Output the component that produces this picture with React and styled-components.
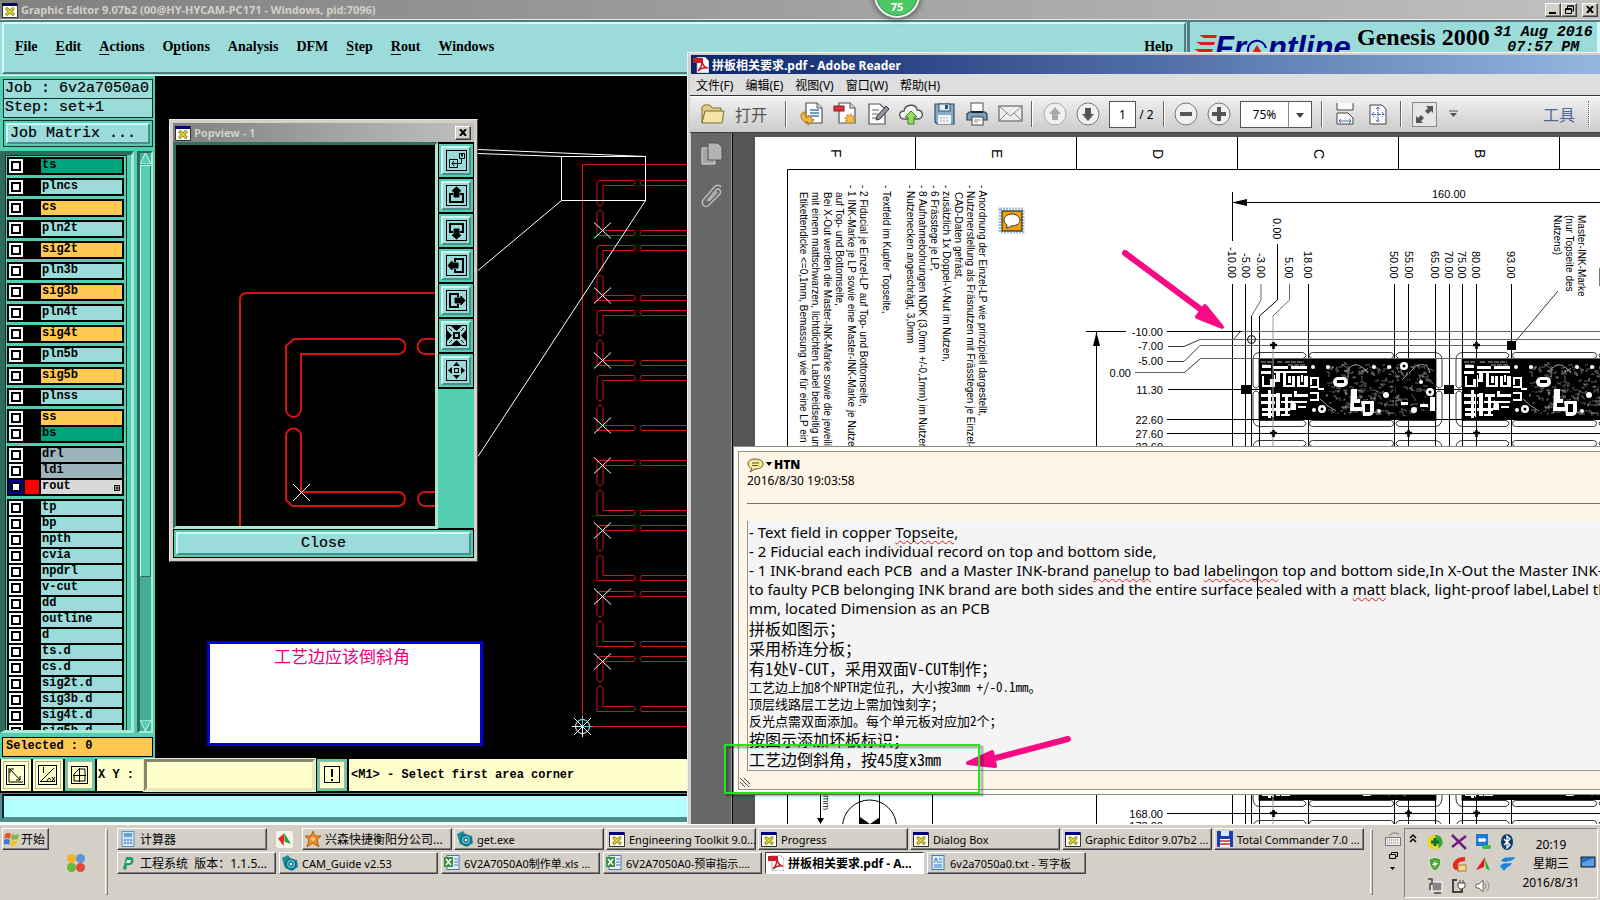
import React, { Fragment, useState } from "react";
import styled, { createGlobalStyle, css } from "styled-components";

const uiFont = '"Noto Sans", "Noto Sans CJK SC", sans-serif';
const monoFont = '"Liberation Mono", "Noto Sans CJK SC", monospace';
const serifFont = '"Liberation Serif", "Times New Roman", serif';
const songFont = '"Noto Sans Mono CJK SC", "Noto Sans CJK SC", monospace';

const aqua = "#9bdbda";
const green = "#54ceb0";
const greenDark = "#2f6b5c";
const greenLight = "#a6ecd8";
const cream = "#ffffce";
const face = "#d4d0c8";

const GlobalStyle = createGlobalStyle`
  * { box-sizing: border-box; }
  body { margin: 0; background: #000; font-family: ${uiFont}; }
  button, input, select { font: inherit; color: inherit; margin: 0; border-radius: 0; }
  button { padding: 0; background: none; border: 0; }
  svg { display: block; flex: none; }
`;

const Desktop = styled.div`
  position: relative;
  display: flex;
  flex-direction: column;
  height: 100vh;
  overflow: hidden;
`;

/* ---------- shared window bits ---------- */

const raised = css`
  border: 1px solid;
  border-color: #fff #404040 #404040 #fff;
  box-shadow: inset -1px -1px 0 #808080;
`;

const CaptionButton = styled.button`
  ${raised}
  display: flex;
  align-items: center;
  justify-content: center;
  width: 16px;
  height: 14px;
  background: ${face};
`;

const XIcon = ({ size = 16 }) => (
  <svg width={size} height={size} viewBox="0 0 16 16">
    <path d="M0.500 1.500 H15.500 V15.500 H0.500 Z" fill="#fff" stroke="#333" />
    <rect width="15" height="3" y="1" fill="#000080" />
    <path d="M4 6 L12 13 M12 6 L4 13" stroke="#8c8420" strokeWidth="3" />
    <path d="M4.500 6.500 L11.500 12.500 M11.500 6.500 L4.500 12.500" stroke="#e6de30" strokeWidth="1.500" />
  </svg>
);

const CloseGlyph = () => (
  <svg width="8" height="7" viewBox="0 0 8 7">
    <path d="M1 0 L7 7 M7 0 L1 7" stroke="#000" strokeWidth="2" />
  </svg>
);

/* ---------- graphic editor ---------- */

const EditorTitle = styled.header`
  display: flex;
  align-items: center;
  height: 20px;
  padding: 0 2px;
  gap: 3px;
  background: linear-gradient(90deg, #808080, #c0c0c0);
  border-bottom: 1px solid #e4e4e0;
  color: ${face};
  font-size: 11px;
  font-weight: 700;
`;
const TitleText = styled.span`
  flex: 1;
  white-space: nowrap;
`;
const CaptionGroup = styled.div`
  display: flex;
  margin-right: 2px;
`;

const EditorHeader = styled.div`
  display: flex;
  height: 56px;
  border-top: 2px solid #4f7d7d;
  border-bottom: 1px solid #e0ffff;
  background: ${aqua};
`;
const MenuBar = styled.nav`
  flex: 1;
  display: flex;
  align-items: center;
  gap: 18px;
  margin: 0 1px 1px 2px;
  padding: 0 11px 2px;
  border: 2px solid;
  border-color: #d2fafa #4f7d7d #4f7d7d #d2fafa;
  font: 700 14px/20px ${serifFont};
`;
const MenuItem = styled.button`
  u { text-underline-offset: 3px; }
  ${(p) => p.$end && "margin-left: auto;"}
`;
const Brand = styled.div`
  display: flex;
  align-items: flex-start;
  gap: 4px;
  width: 413px;
  padding: 1px 2px 0 5px;
  border-left: 3px solid #4f7d7d;
  border-right: 3px solid #d2fafa;
`;
const BrandName = styled.div`
  font: 700 24px/28px ${serifFont};
  white-space: nowrap;
`;
const BrandClock = styled.div`
  font: italic 700 15px/15px ${monoFont};
  text-align: center;
  white-space: pre;
  padding-top: 2px;
`;

const EditorBody = styled.div`
  flex: 1;
  display: flex;
  min-height: 0;
  background: #000;
`;
const Sidebar = styled.aside`
  display: flex;
  flex-direction: column;
  width: 155px;
  padding: 3px 2px 2px 0;
  background: ${green};
  font: 700 12px/14px ${monoFont};
`;
const InfoBox = styled.div`
  height: 20px;
  margin: 0 0 -1px 3px;
  padding-left: 1px;
  border: 1px solid #10332c;
  background: ${aqua};
  font-size: 15px;
  font-weight: 400;
  line-height: 18px;
  white-space: pre;
  -webkit-text-stroke: 0.2px #000;
`;
const MatrixFrame = styled.div`
  display: flex;
  height: 27px;
  margin: 3px 0 4px 3px;
  padding: 2px;
  border: 1px solid #10332c;
`;
const bevelAqua = css`
  background: ${aqua};
  border: 2px solid;
  border-color: #cdf6f4 #4a8f8c #4a8f8c #cdf6f4;
`;
const MatrixButton = styled.button`
  ${bevelAqua}
  flex: 1;
  text-align: left;
  padding-left: 2px;
  font: 400 15px/18px ${monoFont};
  -webkit-text-stroke: 0.2px #000;
`;
const ListArea = styled.div`
  flex: 1;
  display: flex;
  gap: 3px;
  min-height: 0;
`;
const ListWell = styled.div`
  width: 134px;
  padding-right: 4px;
  border: solid;
  border-width: 4px 3px 3px 5px;
  border-color: ${greenDark} ${greenLight} ${greenLight} ${greenDark};
  overflow: hidden;
`;
const LayerList = styled.div`
  display: flex;
  flex-direction: column;
  gap: 3px;
  padding: 1px 2px 0 1px;
  border: 1px solid #10332c;
`;
const LayerGroup = styled.div`
  display: flex;
  flex-direction: column;
  gap: 2px;
  padding: 2px;
  background: #000;
`;
const LayerRow = styled.label`
  display: grid;
  grid-template-columns: 14px 14px 1fr;
  column-gap: 2px;
  height: 14px;
`;
const LayerCheck = styled.input`
  appearance: none;
  width: 14px;
  height: 14px;
  background: #fff;
  box-shadow: inset 0 0 0 2px ${(p) => (p.$current ? "#0000a0" : "#fff")}, inset 0 0 0 4px #000;
`;
const Swatch = styled.span`
  background: ${(p) => p.$color || "#000"};
`;
const LayerName = styled.span`
  display: flex;
  justify-content: space-between;
  padding: 0 2px 0 1px;
  background: ${(p) => p.$color};
  line-height: 13px;
`;
const ScrollTrack = styled.div`
  flex: 1;
  display: flex;
  flex-direction: column;
  justify-content: space-between;
  border: solid;
  border-width: 2px 2px 2px 3px;
  border-color: ${greenDark} ${greenLight} ${greenLight} ${greenDark};
  background: #45ae96;
`;
const ScrollThumb = styled.div`
  flex: 1;
  margin: 1px 0 143px;
  background: ${green};
  border: 1px solid;
  border-color: #cdf6f4 ${greenDark} ${greenDark} #cdf6f4;
`;
const SelectedBox = styled.div`
  height: 20px;
  margin: 4px 0 0 2px;
  padding-left: 3px;
  border: 1px solid #000;
  background: #ffc850;
  line-height: 17px;
`;

const StatusBar = styled.div`
  display: flex;
  height: 34px;
  gap: 2px;
  padding: 0 0 2px 1px;
  background: #000;
  font: 700 12px/32px ${monoFont};
`;
const StatusTool = styled.button`
  display: flex;
  align-items: center;
  justify-content: center;
  width: 30px;
  padding: 2px;
  background: ${(p) => (p.$framed ? green : cream)};
  svg {
    background: ${cream};
    outline: 1px solid #b4b48c;
  }
`;
const CoordField = styled.label`
  display: flex;
  gap: 10px;
  padding: 0 0 0 1px;
  background: ${cream};
  white-space: nowrap;
`;
const CoordInput = styled.input`
  width: 171px;
  border: 3px solid;
  border-color: #86866a #e8e8b8 #e8e8b8 #86866a;
  background: ${cream};
  outline: 1px solid #d8f4d8;
`;
const StatusText = styled.div`
  flex: 1;
  padding-left: 2px;
  background: ${cream};
`;
const MessageBar = styled.div`
  height: 31px;
  padding: 1px 2px 3px;
  background: #4f8c8a;
  border-bottom: 2px solid #e8ffff;
`;
const MessageFace = styled.div`
  height: 100%;
  background: #b3ffff;
  border: 2px solid;
  border-color: #000 #4a8f8c #4a8f8c #123;
`;

const aquaLayer = aqua;
const orangeLayer = "#ffc850";
const layerGroups = [
  [["ts", "#00a47c"]],
  [["plncs", aquaLayer]],
  [["cs", orangeLayer]],
  [["pln2t", aquaLayer]],
  [["sig2t", orangeLayer]],
  [["pln3b", aquaLayer]],
  [["sig3b", orangeLayer]],
  [["pln4t", aquaLayer]],
  [["sig4t", orangeLayer]],
  [["pln5b", aquaLayer]],
  [["sig5b", orangeLayer]],
  [["plnss", aquaLayer]],
  [["ss", orangeLayer], ["bs", "#00a47c"]],
  [["drl", "#9cb4bc"], ["ldi", "#9cb4bc"], ["rout", "#d8d8d8"]],
  ["tp", "bp", "npth", "cvia", "npdrl", "v-cut", "dd", "outline", "d", "ts.d", "cs.d", "sig2t.d", "sig3b.d", "sig4t.d", "sig5b.d"].map((n) => [n, aquaLayer]),
];

const menuItems = [
  ["", "F", "ile"],
  ["", "E", "dit"],
  ["", "A", "ctions"],
  ["O", "p", "tions"],
  ["Analysis", "", ""],
  ["DFM", "", ""],
  ["", "S", "tep"],
  ["", "R", "out"],
  ["", "W", "indows"],
];

const FrontlineLogo = () => (
  <svg width="158" height="34" viewBox="0 0 158 34">
    <path d="M4 12 H22 L21 15 H9 Z M1 19 H20 L19 22 H6 Z M-1 26 H18 L17 29 H4 Z" fill="#e01c14" />
    <g fontFamily="Liberation Sans" fontWeight="700" fontStyle="italic" fontSize="31" fill="#000088">
      <text x="20" y="35">Fr</text>
      <text x="73" y="35">ntline</text>
    </g>
    <path d="M53 29 A9 9 0 0 1 71 25" fill="none" stroke="#000088" strokeWidth="2" />
    <path d="M62 22 L67 30 H57 Z" fill="#e01c14" />
  </svg>
);

/* each entry: top of the upper slot, and whether the cross sits on the lower one */
const panels = [
  [180, true], [245, true], [310, true], [375, true],
  [460, false], [525, false], [591, false], [656, false],
];

const Panel = ({ top, low }) => (
  <g transform={`translate(0 ${top})`}>
    <path
      fill="none"
      stroke="#c81a1a"
      d="M603 5 H634 q3 -3 0 -5 H600 q-3 0 -3 3 V23 q3 5 6 0 Z
         M603 50 H634 q3 2 0 5 H597 V32 q3 -5 6 0 Z
         M688 0 H642 q-4 2 0 5 H688 M688 50 H642 q-4 3 0 5 H688"
    />
    <path
      stroke="#fff"
      d="M594 -8 L611 8 M611 -8 L594 8"
      transform={`translate(0 ${low ? 50 : 5})`}
    />
  </g>
);

const PanelDrawing = () => (
  <svg width="534" height="683" viewBox="155 76 534 683">
    <path d="M689 164.5 H582.5 V726.5 H689" fill="none" stroke="#c81a1a" />
    {panels.map(([top, low]) => (
      <Panel key={top} top={top + 0.5} low={low} />
    ))}
    <g fill="none" stroke="#fff">
      <rect x="561.5" y="156.5" width="84" height="44" />
      <path d="M478 149.5 L646 156.5 M478 153.5 L561 156.5 M478 270.5 L561.5 200.5 M478 456.5 L645.5 200.5" />
      <circle cx="582.5" cy="726.5" r="7" />
      <path d="M574 718 L591 735 M591 718 L574 735 M572 726.5 H582 M582.5 727 V737" />
      <path d="M582.5 716 V726.5 H593" stroke="#35d0e0" />
    </g>
  </svg>
);

const Editor = () => {
  const [coords, setCoords] = useState("");

  return (
    <Fragment>
      <EditorTitle>
        <XIcon />
        <TitleText>Graphic Editor 9.07b2 (00@HY-HYCAM-PC171 - Windows, pid:7096)</TitleText>
        <CaptionGroup>
          <CaptionButton aria-label="Minimize">
            <svg width="8" height="8"><rect x="0" y="6" width="7" height="2" /></svg>
          </CaptionButton>
          <CaptionButton aria-label="Restore">
            <svg width="9" height="9" fill="none" stroke="#000"><path d="M2.500 3 V1 H8.500 V6 H6 M2 1 H9 M0.500 3.500 H6.500 V8.500 H0.500 Z M0 4.500 H7" /></svg>
          </CaptionButton>
        </CaptionGroup>
        <CaptionButton aria-label="Close"><CloseGlyph /></CaptionButton>
      </EditorTitle>
      <EditorHeader>
        <MenuBar>
          {menuItems.map(([before, key, after]) => (
            <MenuItem key={before + key + after}>
              {before}
              {key && <u>{key}</u>}
              {after}
            </MenuItem>
          ))}
          <MenuItem $end>Help</MenuItem>
        </MenuBar>
        <Brand>
          <FrontlineLogo />
          <BrandName>Genesis 2000</BrandName>
          <BrandClock>{"31 Aug 2016\n07:57 PM"}</BrandClock>
        </Brand>
      </EditorHeader>
      <EditorBody>
        <Sidebar>
          <InfoBox>Job : 6v2a7050a0</InfoBox>
          <InfoBox>Step: set+1</InfoBox>
          <MatrixFrame>
            <MatrixButton>Job Matrix ...</MatrixButton>
          </MatrixFrame>
          <ListArea>
            <ListWell>
              <LayerList>
                {layerGroups.map((group) => (
                  <LayerGroup key={group[0][0]}>
                    {group.map(([name, color]) => (
                      <LayerRow key={name}>
                        <LayerCheck type="checkbox" $current={name === "rout"} />
                        <Swatch $color={name === "rout" ? "#f00" : undefined} />
                        <LayerName $color={color}>
                          {name}
                          {name === "rout" && (
                            <svg width="6" height="14" viewBox="0 0 6 14" fill="none" stroke="#000">
                              <path d="M0.500 5.500 H5.500 V10.500 H0.500 Z M3 5 V11 M0 8 H6" />
                            </svg>
                          )}
                        </LayerName>
                      </LayerRow>
                    ))}
                  </LayerGroup>
                ))}
              </LayerList>
            </ListWell>
            <ScrollTrack>
              <svg width="11" height="11"><path d="M5.500 0 L11 11 H0 Z" fill={green} stroke="#cdf6f4" /></svg>
              <ScrollThumb />
              <svg width="11" height="11"><path d="M0 0 H11 L5.500 11 Z" fill={green} stroke="#cdf6f4" /></svg>
            </ScrollTrack>
          </ListArea>
          <SelectedBox>Selected : 0</SelectedBox>
        </Sidebar>
        <PanelDrawing />
      </EditorBody>
      <StatusBar>
        <StatusTool aria-label="Corner snap">
          <svg width="24" height="26" viewBox="0 0 24 26" fill="none" stroke="#000">
            <rect x="2.500" y="3.500" width="18" height="19" />
            <path d="M5 6 V20 H19 M6 7 L16 18 M6 11 V7 H10 M12 18 H16 V14" />
          </svg>
        </StatusTool>
        <StatusTool aria-label="Angle snap">
          <svg width="24" height="26" viewBox="0 0 24 26" fill="none" stroke="#000">
            <rect x="2.500" y="3.500" width="18" height="19" />
            <path d="M4 19.500 H19 M5 19 L18 6 M7.500 5 V11 M11 19 q2 -5 4 -1 M16 15 l3 4 m0 -4 l-3 4" />
          </svg>
        </StatusTool>
        <StatusTool $framed aria-label="Grid">
          <svg width="24" height="26" viewBox="0 0 24 26" fill="none" stroke="#000">
            <rect x="3.500" y="4.500" width="16" height="17" />
            <path d="M6 19 V12 L11 7 H17 V19 Z M11.500 6 V20 M5 13.500 H18" />
          </svg>
        </StatusTool>
        <CoordField>
          X Y :
          <CoordInput value={coords} onChange={(e) => setCoords(e.target.value)} />
        </CoordField>
        <StatusTool $framed aria-label="Warnings">
          <svg width="24" height="26" viewBox="0 0 24 26" fill="none" stroke="#000">
            <rect x="4.500" y="4.500" width="15" height="16" />
            <path d="M12 7 V15 M12 17 V19" strokeWidth="2" />
          </svg>
        </StatusTool>
        <StatusText>&lt;M1&gt; - Select first area corner</StatusText>
      </StatusBar>
      <MessageBar><MessageFace /></MessageBar>
    </Fragment>
  );
};

/* ---------- popview ---------- */

const PopWindow = styled.section`
  position: absolute;
  left: 169px;
  top: 119px;
  display: flex;
  flex-direction: column;
  width: 309px;
  height: 443px;
  padding: 3px;
  border: 1px solid;
  border-color: #e8e8e4 #404040 #404040 #e8e8e4;
  background: ${face};
`;
const PopTitle = styled.header`
  display: flex;
  align-items: center;
  gap: 3px;
  height: 19px;
  padding: 0 3px 0 2px;
  background: linear-gradient(90deg, #808080, #c0c0c0);
  color: ${face};
  font-size: 11px;
  font-weight: 700;
`;
const PopBody = styled.div`
  flex: 1;
  display: flex;
  background: #000;
`;
const PopCanvas = styled.div`
  flex: 1;
  border: 3px solid;
  border-color: #32705f #aee4d2 #aee4d2 #32705f;
  overflow: hidden;
`;
const PopTools = styled.div`
  display: flex;
  flex-direction: column;
  gap: 2px;
  width: 36px;
  padding: 2px 1px 0;
  margin-bottom: 1px;
  background: linear-gradient(#000 247px, ${green} 247px);
`;
const PopTool = styled.button`
  display: flex;
  padding: 2px;
  height: 33px;
  background: ${green};
  span {
    ${bevelAqua}
    flex: 1;
    display: flex;
    align-items: center;
    justify-content: center;
  }
`;
const PopClose = styled.div`
  display: flex;
  height: 29px;
  padding: 2px;
  border: 1px solid #000;
  background: ${green};
`;
const PopCloseButton = styled.button`
  ${bevelAqua}
  flex: 1;
  font: 400 15px/18px ${monoFont};
  -webkit-text-stroke: 0.2px #000;
`;

const popIcons = [
  ["Zoom window", <Fragment key="a"><path d="M3.500 9.500 H11.500 V17.500 H3.500 Z M13.500 3.500 H18.500 V8.500 H13.500 Z M15.500 8 V13.500 H6 M8 11 L6 13.500 L8 16" /><rect x="15.500" y="4" width="1" height="2" /></Fragment>],
  ["Pan up", <Fragment key="b"><path d="M7 9 H4 V17 H17 V9 H14" strokeWidth="2" /><path d="M10.500 2 L15 6 H13 V12 H8 V6 H6 Z" fill="#000" /></Fragment>],
  ["Pan down", <Fragment key="c"><path d="M7 12 H4 V4 H17 V12 H14" strokeWidth="2" /><path d="M10.500 19 L15 15 H13 V9 H8 V15 H6 Z" fill="#000" /></Fragment>],
  ["Pan left", <Fragment key="d"><path d="M9 7 V4 H17 V17 H9 V14" strokeWidth="2" /><path d="M2 10.500 L6 6 V8 H12 V13 H6 V15 Z" fill="#000" /></Fragment>],
  ["Pan right", <Fragment key="e"><path d="M12 7 V4 H4 V17 H12 V14" strokeWidth="2" /><path d="M19 10.500 L15 6 V8 H9 V13 H15 V15 Z" fill="#000" /></Fragment>],
  ["Zoom in", <Fragment key="f"><rect x="8" y="8" width="5" height="5" strokeWidth="2" /><path fill="#000" stroke="none" d="M5 1 H16 L10.500 6 Z M5 20 H16 L10.500 15 Z M1 5 V16 L6 10.500 Z M20 5 V16 L15 10.500 Z" /><path d="M3 3 L6 6 M18 3 L15 6 M3 18 L6 15 M18 18 L15 15" /></Fragment>],
  ["Zoom out", <Fragment key="g"><rect x="8.500" y="8.500" width="4" height="4" /><path fill="#000" stroke="none" d="M7 6 H14 L10.500 2 Z M7 15 H14 L10.500 19 Z M6 7 V14 L2 10.500 Z M15 7 V14 L19 10.500 Z" /></Fragment>],
];

const Popview = () => (
  <PopWindow aria-label="Popview - 1">
    <PopTitle>
      <XIcon />
      <TitleText>Popview - 1</TitleText>
      <CaptionButton aria-label="Close"><CloseGlyph /></CaptionButton>
    </PopTitle>
    <PopBody>
      <PopCanvas>
        <svg width="259" height="381" viewBox="176 145 259 381" fill="none" stroke="#d41414" strokeWidth="2">
          <path d="M240 526 V300 q0 -7 7 -7 H436" />
          <path d="M301 354 H398 a7.500 7.500 0 0 0 0 -15 H294 L286 346 V409 a7.500 8 0 0 0 15 0 Z" />
          <path d="M301 492 H398 a7 7 0 0 1 0 14 H292 L286 500 V436 a7.500 7.500 0 0 1 15 0 Z" />
          <path d="M436 339 H425 a7.500 7.500 0 0 0 0 15 H436 M436 492 H425 a7 7 0 0 0 0 14 H436" />
          <path d="M293 484 L310 501 M310 484 L293 501" stroke="#fff" strokeWidth="1" />
        </svg>
      </PopCanvas>
      <PopTools>
        {popIcons.map(([label, art]) => (
          <PopTool key={label} aria-label={label}>
            <span>
              <svg width="21" height="21" viewBox="0 0 21 21" fill="none" stroke="#000">
                <rect x="0.500" y="0.500" width="20" height="20" />
                {art}
              </svg>
            </span>
          </PopTool>
        ))}
      </PopTools>
    </PopBody>
    <PopClose>
      <PopCloseButton>Close</PopCloseButton>
    </PopClose>
  </PopWindow>
);

const StickyNote = styled.div`
  position: absolute;
  left: 207px;
  top: 641px;
  width: 276px;
  height: 105px;
  padding-right: 6px;
  border: 3px solid #0000dc;
  background: #fff;
  color: #e6007e;
  font: 17px/24px "Noto Sans CJK SC", sans-serif;
  text-align: center;
`;

const ScoreBadge = styled.div`
  position: absolute;
  left: 50%;
  top: -28px;
  margin-left: 74px;
  width: 46px;
  height: 46px;
  padding-top: 26px;
  border: 2px solid #e8f4e8;
  border-radius: 50%;
  background: #4cc764;
  box-shadow: 0 1px 6px rgba(0, 0, 0, 0.6), inset 0 0 0 1px #2f8f4a;
  color: #fff;
  font-size: 11px;
  font-weight: 700;
  line-height: 14px;
  text-align: center;
`;

/* ---------- reader ---------- */

const ReaderWindow = styled.section`
  position: absolute;
  left: 687px;
  top: 52px;
  right: 0;
  bottom: 76px;
  display: flex;
  flex-direction: column;
  padding: 2px 0 0 2px;
  border: solid #f4f2ee;
  border-width: 1px 0 0 1px;
  background: ${face};
`;
const ReaderTitle = styled.header`
  display: flex;
  align-items: center;
  gap: 3px;
  height: 19px;
  margin-left: 1px;
  padding-left: 2px;
  background: linear-gradient(90deg, #0a246a, #94b6e0);
  color: #fff;
  font-size: 12px;
  font-weight: 700;
`;
const ReaderMenu = styled.nav`
  display: flex;
  align-items: center;
  gap: 12px;
  height: 21px;
  padding-left: 6px;
  background: #dedede;
  font-size: 12px;
`;
const Toolbar = styled.div`
  display: flex;
  align-items: center;
  height: 38px;
  border-top: 1px solid #333;
  border-bottom: 1px solid #3c3c3c;
  background: linear-gradient(#f2f2f2, #cbcbcb);
  box-shadow: inset 0 1px 0 #fff;
  padding-left: 10px;
`;
const ToolGroup = styled.div`
  display: flex;
  align-items: center;
  gap: ${(p) => p.$gap || 9}px;
  ${(p) => p.$end && "margin-left: auto;"}
`;
const ToolSep = styled.i`
  width: 2px;
  height: 26px;
  margin: 0 ${(p) => p.$right || 10}px 0 ${(p) => p.$left || 10}px;
  border-left: 1px ${(p) => (p.$dotted ? "dotted" : "solid")} #666;
  border-right: 1px solid #fff;
`;
const OpenButton = styled.button`
  display: flex;
  align-items: center;
  gap: 10px;
  color: #555;
  font-size: 16px;
`;
const PageInput = styled.input`
  width: 27px;
  height: 27px;
  border: 1px solid #555;
  background: #fff;
  font-size: 12px;
  text-align: center;
`;
const PageTotal = styled.span`
  font-size: 12px;
  white-space: pre;
`;
const ZoomBox = styled.label`
  display: grid;
  align-items: center;
  width: 72px;
  height: 27px;
  border: 1px solid #555;
  background: #fff;
  > * { grid-area: 1 / 1; }
  svg {
    justify-self: end;
    pointer-events: none;
  }
`;
const ZoomSelect = styled.select`
  appearance: none;
  height: 25px;
  padding-left: 12px;
  border: 0;
  background: transparent;
  font-size: 12px;
`;
const ToolsLink = styled.button`
  color: #4a6a98;
  font-size: 16px;
`;
const ReaderBody = styled.div`
  flex: 1;
  display: flex;
  min-height: 0;
  margin-left: 1px;
  background: #555;
`;
const ReaderRail = styled.aside`
  display: flex;
  flex-direction: column;
  align-items: center;
  gap: 19px;
  width: 42px;
  padding-top: 9px;
  background: #676767;
  border-right: 1px solid #000;
  box-shadow: inset -1px 0 0 #999;
`;
const PageArea = styled.div`
  flex: 1;
  overflow: hidden;
  padding: 4px 0 0 22px;
  svg { background: #fff; }
`;

const arialDim = { fontFamily: "Liberation Sans", fontSize: 11 };

const notes = [
  [979, 185, "- Anordnung der Einzel-LP wie prinzipiell dargestellt,"],
  [967, 185, "- Nutzenerstellung als Fräsnutzen mit Frässtegen je Einzel-LP"],
  [955, 192, "CAD-Daten gefräst,"],
  [943, 185, "- zusätzlich 1x Doppel-V-Nut im Nutzen,"],
  [931, 185, "- 6 Frässtege je LP,"],
  [919, 185, "- 8 Aufnahmebohrungen NDK (3,0mm +/-0,1mm) im Nutzen"],
  [907, 185, "- Nutzenecken angeschrägt, 3,0mm"],
  [883, 185, "- Textfeld im Kupfer Topseite,"],
  [860, 185, "- 2 Fiducial je Einzel-LP auf Top- und Bottomseite,"],
  [848, 185, "- 1 INK-Marke je LP sowie eine Master-INK-Marke je Nutzen"],
  [836, 192, "auf Top- und Bottomseite,"],
  [824, 192, "Bei X-Out werden die Master-INK-Marke sowie die jeweilige"],
  [812, 192, "mit einem mattschwarzen, lichtdichten Label beidseitig und"],
  [800, 192, "Etikettendicke <=0,1mm, Bemassung wie für eine LP ein"],
  [1578, 215, "Master-INK-Marke"],
  [1566, 215, "(nur Topseite des"],
  [1554, 215, "Nutzens)"],
];

const columnDims = [
  [1228, 247, "-10.00"], [1242, 253, "-5.00"], [1257, 253, "-3.00"], [1273, 218, "0.00"],
  [1285, 257, "5.00"], [1304, 251, "18.00"], [1390, 251, "50.00"], [1405, 251, "55.00"],
  [1431, 251, "65.00"], [1445, 251, "70.00"], [1458, 251, "75.00"], [1472, 251, "80.00"], [1507, 251, "93.00"],
];

const rowDims = [
  [1163, 336, "-10.00"], [1163, 350, "-7.00"], [1163, 365, "-5.00"], [1131, 377, "0.00"],
  [1163, 394, "11.30"], [1163, 424, "22.60"], [1163, 438, "27.60"], [1163, 451, "32.60"],
  [1163, 818, "168.00"], [1163, 830, "173.00"],
];

const longVerticals = [1232, 1245, 1308, 1394, 1408, 1435, 1449, 1462, 1476, 1511];

/* thin tracks of the populated half, from a fixed seed so every board is alike */
const tracks = (() => {
  let seed = 41;
  const next = (n) => {
    seed = (seed * 1103 + 12345) % 65521;
    return seed % n;
  };
  let d = "";
  for (let i = 0; i < 230; i++) {
    const x = 66 + next(104);
    const y = 6 + next(50);
    d += `M${x} ${y}h${next(6)}v${next(7) - 3}`;
    if (next(3) === 0) d += `l${next(4)} ${next(4)}`;
  }
  return d;
})();

const Board = ({ x }) => (
  <g transform={`translate(${x} 359)`}>
    <rect width="176" height="61" />
    <path d={tracks} fill="none" stroke="#a4a4a4" strokeWidth="0.6" />
    <path d="M1 3 H14 M17 3 H22 M25 3 H44 M2 6 H10 M28 6 H46" stroke="#aaa" strokeDasharray="5 1" />
    <g fill="#fff">
      <path d="M2 6 h9 v3 h-9 z M13 7 h15 v3 h-15 z M31 7 h16 v3 h-16 z M1 12 h10 v3 h-10 z M14 12 h33 v2 h-33 z" />
      <path d="M2 17 h2 v11 h-2 z M4 26 h6 v-6 h3 v8 h-9 z M16 12 h4 v11 h-5 v5 h-2 v-8 h3 z M23 14 h3 v12 h6 v-9 h3 v11 h-12 z M37 17 h3 v9 h4 v-9 h4 v11 h-11 z" />
      <path d="M1 35 h19 v3 h-19 z M22 35 h10 v3 h-10 z M34 35 h14 v3 h-14 z M8 31 h3 v28 h-3 z M16 34 h4 v23 h-4 z M1 42 h14 v3 h-14 z M21 42 h26 v2 h-26 z M25 38 h3 v18 h-3 z M2 49 h28 v3 h-28 z M31 41 l5 4 v6 h-6 z M2 54 h12 v3 h-12 z M21 55 h9 v2 h-9 z" />
      <path d="M14 16 h1 v12 h-1 z M28 17 h3 v7 h-3 z M41 16 h2 v7 h-2 z M34 32 h3 v6 h-3 z M38 47 h8 v2 h-8 z M12 38 h2 v20 h-2 z" />
      <rect x="73" y="18" width="15" height="10" rx="5" />
      <circle cx="53" cy="8" r="2" /><circle cx="68" cy="8" r="2" /><circle cx="114" cy="8" r="2" />
      <circle cx="129" cy="8" r="2" /><circle cx="144" cy="7" r="4" /><circle cx="170" cy="33" r="4" />
      <circle cx="62" cy="50" r="4" /><circle cx="154" cy="51" r="3" /><circle cx="54" cy="51" r="2" />
      <circle cx="119" cy="52" r="2" /><circle cx="126" cy="36" r="3" /><circle cx="161" cy="23" r="2" />
      <path d="M91 30 h6 v10 h3 v4 h-6 v4 h8 v4 h-12 z M101 42 h13 v9 q0 6 -6 6 h-5 z M141 43 h7 v3 h-7 z M160 45 h8 v3 h-8 z M170 38 h5 v14 h-5 z" />
    </g>
    <path d="M50 41 H58 V34 H50 M50 28 H58 V19 H51 V26 M58 30 H64" fill="none" stroke="#fff" strokeWidth="2" />
    <g>
      <circle cx="144" cy="7" r="1.500" /><circle cx="170" cy="33" r="1.500" /><circle cx="62" cy="50" r="1.500" />
      <rect x="77" y="21" width="7" height="3" /><rect x="105" y="45" width="5" height="8" />
    </g>
    <path d="M88 18 V10 Q96 2 103 9 L108 14 M60 40 L68 47 L76 52 M142 21 L156 7 Q168 2 170 14" fill="none" stroke="#999" />
  </g>
);

const Slots = ({ x }) => (
  <g transform={`translate(${x} 352)`} fill="none" stroke="#222" strokeWidth="0.9">
    <path d="M7 34 q-3 4 -6 0 V8 Q1 0.500 8 0.500 H51 q6 3 0 6 H7 Z" />
    <rect x="57.500" y="0.500" width="84" height="6" rx="3" />
    <path d="M184 34 q3 4 6 0 V8 Q190 0.500 182 0.500 H147 q-6 3 0 6 H184 Z" />
    <path d="M7 41 q-3 -4 -6 0 V66 Q1 74.500 8 74.500 H51 q6 -3 0 -6 H7 Z" />
    <rect x="57.500" y="68.500" width="84" height="6" rx="3" />
    <path d="M184 41 q3 -4 6 0 V66 Q190 74.500 182 74.500 H147 q-6 -3 0 -6 H184 Z" />
  </g>
);

const BoardRow = ({ dy }) => (
  <g transform={`translate(0 ${dy})`}>
    {[1252, 1455].map((x) => <Slots key={x} x={x} />)}
    {[1260, 1463].map((x) => <Board key={x} x={x} />)}
  </g>
);

const DrawingPage = () => (
  <svg width="845" height="687" viewBox="755 137 845 687">
    <path d="M1600 169.500 H787.500 V824 M915.500 137 V169 M1076.500 137 V169 M1237.500 137 V169 M1398.500 137 V169 M1559.500 137 V169" fill="none" stroke="#000" />
    <g fontFamily="Liberation Sans" fontSize="14">
      {["F", "E", "D", "C", "B"].map((c, i) => (
        <text key={c} transform={`translate(${831 + i * 161} 149) rotate(90)`}>{c}</text>
      ))}
    </g>
    <g fontFamily="Liberation Sans" fontSize="10">
      {notes.map(([x, y, text]) => (
        <text key={text} transform={`translate(${x} ${y}) rotate(90)`}>{text}</text>
      ))}
    </g>
    <BoardRow dy={0} />
    <BoardRow dy={88} />
    <BoardRow dy={380} />
    <BoardRow dy={468} />
    <g {...arialDim}>
      <text x="1432" y="198">160.00</text>
      {columnDims.map(([x, y, text]) => (
        <text key={text} transform={`translate(${x} ${y}) rotate(90)`}>{text}</text>
      ))}
      {rowDims.map(([x, y, text]) => (
        <text key={text} x={x} y={y} textAnchor="end">{text}</text>
      ))}
      <text transform="translate(823 795) rotate(90)" fontSize="9">mm</text>
    </g>
    <g fill="none" stroke="#000">
      {longVerticals.map((x) => <path key={x} d={`M${x + 0.5} 284 V824`} />)}
      <path d="M1232.500 192 V241 M1232 202.500 H1600" />
      <path d="M1086 331.500 H1126 M1096.500 332 V824 M1167 331.500 H1242 M1168 389.500 H1260 M1436 389.500 H1463 M1167 419.500 H1600 M1167 433.500 H1600 M1167 813.500 H1600" />
      <path d="M1277.500 244 V300 L1259.500 316 V824 M1251.500 316 V824" />
      <path d="M1168 346.500 H1184 L1200 339.500 M1167 361.500 H1184 L1200 345.500 M1184 373 L1200 359 M1233 340 L1240 332 M1515 342 L1558 291" strokeWidth="0.8" />
      <path d="M1242 331.500 H1600 M1200 339.500 H1600 M1200 345.500 H1512 M1135 372.500 H1184 M1200 358.500 H1600 M1261 284 V300 L1251.500 316 M1289.500 284 V300 L1273 316" stroke="#666" />
      <path d="M1273 316 V824" stroke="#999" />
      <circle cx="1251.500" cy="339.500" r="4" />
      <path d="M932.500 790 V824 M820.500 790 V822 M859.500 790 V824 M879.500 790 V824" />
      <circle cx="869.500" cy="827" r="27" />
    </g>
    <path d="M1232 202.500 L1247 199 V206 Z M1096.500 332 L1093 346 H1100 Z M820.500 824 L817 818 H824 Z M860 817 L870 824 H860 Z M880 817 L870 824 H880 Z" />
    <path d="M1241 385 h10 v9 h-10 z M1444 385 h10 v9 h-10 z M1507 341 h9 v9 h-9 z" />
    {[[1273, 345], [1476, 345], [1273, 433], [1408, 433], [1476, 433], [1273, 813], [1408, 813], [1476, 813]].map(([x, y]) => (
      <path key={`${x}-${y}`} d={`M${x - 3} ${y} H${x + 4} M${x + 0.5} ${y - 3} V${y + 4}`} stroke="#000" strokeWidth="2.500" />
    ))}
    <rect x="1000" y="209" width="23" height="23" fill="none" stroke="#9fc3dc" strokeWidth="3" strokeDasharray="2 1" />
    <rect x="1002" y="211" width="20" height="20" fill="#f2a010" stroke="#111" />
    <path d="M1012 214 c-5 0 -8 3 -8 6 c0 3 2 4 3 5 q0 2 -1 3 q3 0 5 -2 c5 0 9 -2 9 -6 c0 -3 -4 -6 -8 -6 z" fill="#fff" stroke="#333" />
    <path d="M1599.500 268 V286" stroke="#777" />
  </svg>
);

/* comment pop-up */

const CommentWindow = styled.section`
  position: absolute;
  left: 45px;
  top: 393px;
  right: 0;
  bottom: 29px;
  display: flex;
  flex-direction: column;
  padding: 4px 0 4px 4px;
  border: solid #8a8a80;
  border-width: 1px 0 1px 1px;
  background: #fffdf6;
`;
const CommentBody = styled.div`
  flex: 1;
  display: flex;
  flex-direction: column;
  min-height: 0;
  padding: 5px 0 18px 8px;
  border: solid #97948c;
  border-width: 1px 0 1px 1px;
  background: #fef5e6;
`;
const CommentAuthor = styled.div`
  display: flex;
  align-items: center;
  gap: 2px;
  font-size: 12px;
  font-weight: 700;
  line-height: 16px;
`;
const CommentDate = styled.time`
  padding-bottom: 14px;
  border-bottom: 1px solid #77736c;
  font-size: 12px;
  line-height: 16px;
`;
const CommentText = styled.div`
  flex: 1;
  min-height: 0;
  margin-top: 17px;
  padding: 2px 0 0 1px;
  border: solid #97948c;
  border-width: 0 0 1px 1px;
  background: #f4f4f4;
  overflow: hidden;
  white-space: pre;
  outline: 0;
  p { margin: 0; }
`;
const Latin = styled.p`
  font-size: 15px;
  line-height: 19px;
`;
const Song = styled.p`
  font-family: ${songFont};
  font-size: ${(p) => (p.$small ? 13 : 16)}px;
  line-height: ${(p) => (p.$small ? 17 : 20)}px;
  height: ${(p) => (p.$small ? 17 : 20)}px;
`;
const Misspelt = styled.span`
  text-decoration: underline wavy #d02020 1px;
  text-decoration-skip-ink: none;
  text-underline-offset: 2px;
`;
const Caret = styled.i`
  border-left: 1px solid #000;
  margin-right: -1px;
`;
const Grip = styled.svg`
  position: absolute;
  left: 6px;
  bottom: 6px;
`;

const CommentPopup = () => (
  <CommentWindow>
    <CommentBody>
      <CommentAuthor>
        <svg width="17" height="15" viewBox="0 0 17 15">
          <path d="M8 1 C3 1 1 3 1 6 C1 8 3 10 5 10.500 L3 14 L8 11 C13 11 16 9 16 6 C16 3 13 1 8 1 Z" fill="#fbe98c" stroke="#555" />
          <path d="M5 5 H12 M5 7.500 H11" stroke="#555" />
        </svg>
        <svg width="6" height="8"><path d="M0 1 H6 L3 5 Z" /></svg>
        <strong>HTN</strong>
      </CommentAuthor>
      <CommentDate>2016/8/30 19:03:58</CommentDate>
      <CommentText role="textbox" aria-multiline="true" aria-label="Comment" tabIndex={0}>
        <Latin>- Text field in copper <Misspelt>Topseite</Misspelt>,</Latin>
        <Latin>- 2 Fiducial each individual record on top and bottom side,</Latin>
        <Latin>
          - 1 INK-brand each PCB{"  "}and a Master INK-brand <Misspelt>panelup</Misspelt> to bad <Misspelt>labelingon</Misspelt> top and bottom side,In X-Out the Master INK-brand
        </Latin>
        <Latin>
          to faulty PCB belonging INK brand are both sides and the entire surface <Caret />sealed with a <Misspelt>matt</Misspelt> black, light-proof label,Label thickness
        </Latin>
        <Latin>mm, located Dimension as an PCB</Latin>
        <Song>拼板如图示；</Song>
        <Song>采用桥连分板；</Song>
        <Song>有1处V-CUT，采用双面V-CUT制作；</Song>
        <Song $small>工艺边上加8个NPTH定位孔，大小按3mm +/-0.1mm。</Song>
        <Song $small>顶层线路层工艺边上需加蚀刻字；</Song>
        <Song $small>反光点需双面添加。每个单元板对应加2个；</Song>
        <Song>按图示添加坏板标识；</Song>
        <Song>工艺边倒斜角，按45度x3mm</Song>
      </CommentText>
    </CommentBody>
    <Grip width="10" height="10" stroke="#444"><path d="M0 0 L9 9 M4 0 L10 6 M0 4 L5 9" /></Grip>
  </CommentWindow>
);

const PdfIcon = () => (
  <svg width="16" height="16" viewBox="0 0 16 16">
    <path d="M4 0 H12 L16 4 V16 H4 Z" fill="#fff" stroke="#999" strokeWidth="0.8" />
    <path d="M0 1 H10 V6 H0 Z" fill="#c41e2a" />
    <path d="M5 14 C8 11 9 8 9 4 C10 9 12 11 15 11 C11 10 8 11 5 14 Z" fill="none" stroke="#c41e2a" strokeWidth="1.500" />
  </svg>
);

const RoundTool = ({ dim, children }) => (
  <svg width="24" height="24" viewBox="0 0 24 24">
    <circle cx="12" cy="12" r="11" fill="#f0f0f0" stroke={dim ? "#aaa" : "#777"} />
    <g fill={dim ? "#aaa" : "#555"}>{children}</g>
  </svg>
);

const Page = ({ children, fill = "#fdfdfd" }) => (
  <g>
    <path d="M6 1 H17 L22 6 V21 H6 Z" fill={fill} stroke="#555" strokeWidth="1.200" />
    <path d="M17 1 V6 H22" fill="#ddd" stroke="#555" />
    {children}
  </g>
);

const fileTools = [
  ["Convert", <Page key="p"><path d="M10 8 H19 M10 11 H19 M10 14 H19" stroke="#3f78b8" strokeWidth="1.500" /><path d="M1 14 C1 11 3 10 6 10 C4 12 5 15 8 16 V13 L14 18 L8 23 V20 C4 20 1 18 1 14 Z" fill="#f0b840" stroke="#a87418" /></Page>],
  ["Create PDF", <Page key="p"><rect x="1" y="4" width="10" height="5" fill="#d8343c" stroke="#8a1c22" /><circle cx="17" cy="17" r="4" fill="#f2c050" stroke="#d49a30" strokeDasharray="2 1" strokeWidth="2.500" /></Page>],
  ["Sign", <g key="p"><path d="M3 2 H14 L19 7 V22 H3 Z" fill="#fdfdfd" stroke="#555" strokeWidth="1.200" /><path d="M6 8 H13 M6 12 H12 M6 16 H11" stroke="#666" /><path d="M10 18 L11 14 L20 4 L23 7 L14 17 Z" fill="#8a96a4" stroke="#333" /></g>],
  ["Upload", <g key="p"><path d="M6 17 C-1 17 -1 9 5 9 C6 2 17 1 18 8 C25 8 25 17 19 17 Z" fill="#f3f3f3" stroke="#555" strokeWidth="1.400" /><path d="M12 9 L18 15 H15 V22 H9 V15 H6 Z" fill="#9cdc5c" stroke="#3c7c1c" /></g>],
  ["Save", <g key="p"><path d="M3 2 H22 V22 H5 L3 20 Z" fill="#88acc8" stroke="#34506c" strokeWidth="1.200" /><rect x="7" y="2" width="11" height="7" fill="#e4eef6" stroke="#34506c" /><rect x="13" y="3" width="3" height="4" fill="#34506c" /><rect x="6" y="13" width="13" height="9" fill="#f4f4f4" /><path d="M8 16 H17 M8 19 H17" stroke="#aaa" strokeDasharray="2 1" /></g>],
  ["Print", <g key="p"><rect x="6" y="1" width="12" height="9" fill="#fff" stroke="#555" /><path d="M4 10 H20 L22 12 V18 H2 V12 Z" fill="#7ca0bc" stroke="#2c4054" strokeWidth="1.200" /><path d="M6 10 H18" stroke="#222" strokeWidth="2" /><rect x="7" y="15" width="11" height="8" fill="#fff" stroke="#444" /><path d="M9 18 H16 M9 20 H13" stroke="#888" /></g>],
  ["Mail", <g key="p"><rect x="1" y="4" width="23" height="15" fill="#eee" stroke="#666" strokeWidth="1.200" /><path d="M1 4 L12.500 14 L24 4 M1 19 L9 11 M24 19 L16 11" fill="none" stroke="#888" /></g>],
];

const Reader = () => {
  const [page, setPage] = useState("1");

  return (
    <ReaderWindow aria-label="Adobe Reader">
      <ReaderTitle>
        <PdfIcon />
        拼板相关要求.pdf - Adobe Reader
      </ReaderTitle>
      <ReaderMenu>
        {["文件(F)", "编辑(E)", "视图(V)", "窗口(W)", "帮助(H)"].map((m) => (
          <button key={m}>{m}</button>
        ))}
      </ReaderMenu>
      <Toolbar>
        <OpenButton>
          <svg width="25" height="22" viewBox="0 0 25 22">
            <path d="M2 20 V4 L4 2 H10 L12 5 H21 V9" fill="#e4cc84" stroke="#7a6a38" />
            <path d="M2 20 L5 8 H24 L22 20 Z" fill="#f4e2a6" stroke="#7a6a38" />
          </svg>
          打开
        </OpenButton>
        <ToolSep $left={18} $right={13} />
        <ToolGroup $gap={8}>
          {fileTools.map(([label, art]) => (
            <button key={label} aria-label={label}>
              <svg width="25" height="24" viewBox="0 0 25 24">{art}</svg>
            </button>
          ))}
        </ToolGroup>
        <ToolSep $left={8} />
        <ToolGroup>
          <button aria-label="Previous page"><RoundTool dim><path d="M12 5 L18 12 H15 V18 H9 V12 H6 Z" /></RoundTool></button>
          <button aria-label="Next page"><RoundTool><path d="M12 19 L18 12 H15 V6 H9 V12 H6 Z" /></RoundTool></button>
          <PageInput aria-label="Page" value={page} onChange={(e) => setPage(e.target.value)} />
        </ToolGroup>
        <PageTotal> / 2</PageTotal>
        <ToolSep $left={9} $right={9} />
        <ToolGroup>
          <button aria-label="Zoom out"><RoundTool><rect x="6" y="10" width="12" height="4" /></RoundTool></button>
          <button aria-label="Zoom in"><RoundTool><path d="M10 5 H14 V10 H19 V14 H14 V19 H10 V14 H5 V10 H10 Z" /></RoundTool></button>
          <ZoomBox>
            <ZoomSelect aria-label="Zoom" defaultValue="75%">
              <option>75%</option>
              <option>100%</option>
            </ZoomSelect>
            <svg width="23" height="25"><path d="M0.500 0 V25" stroke="#888" /><path d="M8 11 H16 L12 16 Z" fill="#444" /></svg>
          </ZoomBox>
        </ToolGroup>
        <ToolSep $left={9} $right={13} />
        <ToolGroup $gap={15}>
          <button aria-label="Fit width">
            <svg width="18" height="22" viewBox="0 0 18 22" fill="#fafafa" stroke="#444">
              <path d="M1 0 V7 H17 V0" /><path d="M1 21 V10 H12 L17 15 V21 Z" /><path d="M3 18 H15 M5 16 L3 18 L5 20 M13 16 L15 18 L13 20" stroke="#4a6aa8" />
            </svg>
          </button>
          <button aria-label="Fit page">
            <svg width="18" height="21" viewBox="0 0 18 21" fill="#fafafa" stroke="#444">
              <path d="M1 1 H13 L17 5 V20 H1 Z" /><path d="M9 3 V18 M3 10.500 H15 M7 5 L9 3 L11 5 M7 16 L9 18 L11 16 M5 8 L3 10.500 L5 13 M13 8 L15 10.500 L13 13" stroke="#4a6aa8" strokeDasharray="4 1" />
            </svg>
          </button>
        </ToolGroup>
        <ToolSep $left={13} />
        <ToolGroup $gap={12}>
          <button aria-label="Read mode">
            <svg width="25" height="25" viewBox="0 0 25 25">
              <rect x="0.500" y="0.500" width="24" height="24" fill="#e6e6e6" stroke="#888" />
              <path d="M14 4 H21 V11 L19 9 L16 12 L13 9 L16 6 Z M11 21 H4 V14 L6 16 L9 13 L12 16 L9 19 Z" fill="#555" />
            </svg>
          </button>
          <button aria-label="More">
            <svg width="9" height="8"><path d="M0 1 H9" stroke="#555" /><path d="M1 3 H8 L4.500 7 Z" fill="#555" /></svg>
          </button>
        </ToolGroup>
        <ToolGroup $end>
          <ToolsLink>工具</ToolsLink>
        </ToolGroup>
        <ToolSep $left={13} $dotted />
      </Toolbar>
      <ReaderBody>
        <ReaderRail>
          <svg width="22" height="23" viewBox="0 0 22 23" fill="#a4a4a4" stroke="#ddd">
            <path d="M1 6 H14 V22 H1 Z" /><path d="M7 1 H17 L21 5 V18 H7 Z" fill="#b4b4b4" stroke="#555" />
          </svg>
          <svg width="22" height="24" viewBox="0 0 22 24" fill="none" stroke="#bbb" strokeWidth="1.500">
            <path d="M6 17 L15 6 q2 -2 4 0 q1 2 0 4 L8 21 q-3 3 -6 0 q-2 -3 1 -6 L14 2 q4 -2 6 1 M8 17 L16 8" />
          </svg>
        </ReaderRail>
        <PageArea>
          <DrawingPage />
        </PageArea>
      </ReaderBody>
      <CommentPopup />
    </ReaderWindow>
  );
};

/* hand-drawn marks lie over every window */

const Marks = styled.svg`
  position: absolute;
  left: 0;
  top: 0;
  pointer-events: none;
`;

const Annotations = () => (
  <Marks width="1600" height="900" viewBox="0 0 1600 900">
    <g stroke="#f80a84" fill="#f80a84" strokeLinecap="round" strokeLinejoin="round">
      <path d="M1125 253 L1203 311" strokeWidth="6" />
      <path d="M1197 317 L1205 306 L1222 327 Z" strokeWidth="4" />
      <path d="M1068 739 L992 759" strokeWidth="6" />
      <path d="M992 752 L995 766 L968 763 Z" strokeWidth="4" />
    </g>
    <rect x="727" y="747" width="255" height="48" fill="none" stroke="#000" strokeWidth="3" opacity="0.250" />
    <rect x="725" y="745" width="254" height="48" fill="none" stroke="#22e422" strokeWidth="2" />
  </Marks>
);

/* ---------- taskbar ---------- */

const Bar = styled.footer`
  display: flex;
  height: 76px;
  padding: 3px 2px 2px;
  border-top: 1px solid #fff;
  background: ${face};
  font-size: 12px;
`;
const StartButton = styled.button`
  ${raised}
  display: flex;
  align-items: center;
  gap: 1px;
  width: 47px;
  height: 22px;
  padding-left: 1px;
  background: ${face};
  white-space: nowrap;
`;
const QuickLaunch = styled.div`
  display: flex;
  align-items: flex-end;
  width: 56px;
  height: 44px;
  padding: 0 0 0 18px;
`;
const BarGrip = styled.i`
  width: 3px;
  height: 66px;
  margin: 1px 9px 0 0;
  border: 1px solid;
  border-color: #fff #808080 #808080 #fff;
`;
const Tasks = styled.div`
  flex: 1;
  display: flex;
  flex-direction: column;
  gap: 2px;
`;
const TaskRow = styled.div`
  display: flex;
  gap: ${(p) => p.$gap}px;
`;
const TaskButton = styled.button`
  ${raised}
  display: flex;
  flex: none;
  align-items: center;
  gap: 4px;
  width: ${(p) => (p.$wide ? 159 : 150)}px;
  height: 22px;
  padding: 0 2px;
  background: ${face};
  font-size: ${(p) => (p.$latin ? 11 : 12)}px;
  white-space: pre;
  overflow: hidden;
  ${(p) =>
    p.$active &&
    css`
      border-color: #404040 #fff #fff #404040;
      box-shadow: none;
      background: #fff;
      font-weight: 700;
    `}
`;
const LooseIcon = styled.span`
  display: flex;
  align-items: center;
  padding: 0 7px;
`;
const InputTools = styled.div`
  display: flex;
  flex-direction: column;
  align-items: center;
  gap: 5px;
  width: 22px;
  padding-top: 3px;
`;
const Tray = styled.div`
  display: flex;
  width: 194px;
  height: 70px;
  padding: 2px 1px 3px 4px;
  border: 1px solid;
  border-color: #808080 #fff #fff #808080;
`;
const TrayIcons = styled.div`
  display: grid;
  grid-template-columns: repeat(4, 24px);
  grid-auto-rows: 22px;
  align-content: start;
  place-items: center;
  padding: 0 0 0 6px;
`;
const Clock = styled.div`
  flex: 1;
  font-size: 12px;
  line-height: 19px;
  text-align: center;
  padding: 4px 0 0 3px;
`;

const Glyph = ({ children, size = 16 }) => (
  <svg width={size} height={size} viewBox="0 0 16 16">{children}</svg>
);
const ExcelIcon = () => (
  <Glyph>
    <rect x="3" y="0.500" width="12" height="14" fill="#e4f0fa" stroke="#4a78b0" />
    <path d="M10 4 H14 M10 7 H14 M10 10 H14" stroke="#4a78b0" />
    <rect x="0" y="2" width="9" height="10" fill="#3c8c3c" />
    <path d="M2 4 L7 10 M7 4 L2 10" stroke="#fff" strokeWidth="1.500" />
  </Glyph>
);
const EyeIcon = () => (
  <Glyph>
    <path d="M0 3 L6 0 L9 4 L15 5 L16 12 L10 16 L3 13 Z" fill="#1c8c94" />
    <circle cx="9" cy="9" r="5" fill="#3cc4d0" stroke="#123c60" />
    <circle cx="9" cy="9" r="2" fill="#fff" stroke="#123c60" />
  </Glyph>
);
const FloppyIcon = () => (
  <Glyph>
    <path d="M0 0 H16 V16 H1 L0 15 Z" fill="#1c3cb4" />
    <rect x="4" y="0" width="8" height="5" fill="#dfe6ff" />
    <rect x="3" y="8" width="10" height="8" fill="#fff" />
    <path d="M3 10 H13 M3 13 H13" stroke="#d82424" strokeWidth="1.500" />
  </Glyph>
);

const rowOne = [
  ["计算器", <Glyph key="i"><rect x="2" y="0.500" width="12" height="15" fill="#d4e8f8" stroke="#5c94c4" /><rect x="4" y="2" width="8" height="4" fill="#5ca4dc" /><path d="M4 9 H12 M4 12 H12" stroke="#5c94c4" strokeWidth="2" strokeDasharray="2 1" /></Glyph>],
  null,
  ["兴森快捷衡阳分公司...", <Glyph key="i"><path d="M8 0 L10 5 L16 5 L12 9 L14 16 L8 12 L2 16 L4 9 L0 5 L6 5 Z" fill="#f08c28" stroke="#b45c10" /><circle cx="8" cy="8" r="2" fill="#ffd890" /></Glyph>],
  ["get.exe", <EyeIcon key="i" />],
  ["Engineering Toolkit 9.0...", <XIcon key="i" />],
  ["Progress", <XIcon key="i" />],
  ["Dialog Box", <XIcon key="i" />],
  ["Graphic Editor 9.07b2 ...", <XIcon key="i" />],
  ["Total Commander 7.0 ...", <FloppyIcon key="i" />],
];
const rowTwo = [
  ["工程系统  版本：1.1.5...", <Glyph key="i"><path d="M3 14 L6 2 H11 Q15 3 13 8 Q11 11 7 10 L6 15 Z" fill="#1c9c6c" /><path d="M7 5 H11 L10 8 H6 Z" fill="#fff" /></Glyph>],
  ["CAM_Guide v2.53", <EyeIcon key="i" />],
  ["6V2A7050A0制作单.xls ...", <ExcelIcon key="i" />],
  ["6V2A7050A0-预审指示....", <ExcelIcon key="i" />],
  ["拼板相关要求.pdf - A...", <PdfIcon key="i" />],
  ["6v2a7050a0.txt - 写字板", <Glyph key="i"><rect x="2" y="0.500" width="12" height="14" fill="#d8ecfc" stroke="#3c7cb8" /><path d="M4 8 L6 3 L8 8 M9 4 H12 M9 7 H12 M4 10 H12 M4 12 H12" stroke="#3c7cb8" fill="none" /></Glyph>],
];

const trayIcons = [
  <Fragment key="1"><circle cx="8" cy="8" r="7.500" fill="#e8d820" /><path d="M8 1 A7 7 0 0 1 12 14 Z" fill="#30a840" /><path d="M8 4 V12 M4 8 H12" stroke="#0c6c2c" strokeWidth="3" /></Fragment>,
  <path key="2" d="M1 1 L15 15 M15 2 L1 13" stroke="#701c80" strokeWidth="2.500" />,
  <Fragment key="3"><rect x="1" y="0" width="12" height="12" fill="#1c7cd8" /><path d="M3 6 L5 4 V8 Z M11 6 L9 4 V8 Z M5 5 H9 V7 H5 Z" fill="#fff" stroke="#fff" /><rect x="7" y="11" width="9" height="4" rx="2" fill="#3cbc3c" /></Fragment>,
  <Fragment key="4"><ellipse cx="8" cy="8" rx="6" ry="8" fill="#0c3c6c" /><path d="M5 5 L11 11 L8 14 V2 L11 5 L5 11" fill="none" stroke="#fff" strokeWidth="1.300" /></Fragment>,
  <Fragment key="5"><path d="M8 1 L14 3 C14 9 12 13 8 15 C4 13 2 9 2 3 Z" fill="#4ca43c" stroke="#e8f4d8" /><path d="M9 4 L5 9 H8 L7 12 L11 7 H8 Z" fill="#fff" /></Fragment>,
  <Fragment key="6"><path d="M14 1 C5 1 1 6 2 11 C3 15 8 15 11 13 L9 10 C6 11 6 8 9 6 L14 5 Z" fill="#e02c1c" /><rect x="7" y="9" width="8" height="6" fill="#f4d890" stroke="#b07c2c" /></Fragment>,
  <Fragment key="7"><path d="M10 1 L1 14 L9 11 Z" fill="#e01818" /><path d="M10 3 L15 14 L11 13 Z" fill="#20b830" /></Fragment>,
  <Fragment key="8"><path d="M2 5 C5 0 9 2 16 1 C15 5 10 5 6 6 Z M1 10 C4 6 9 8 13 7 C11 11 8 10 5 15 Z" fill="#1c84dc" /></Fragment>,
  <Fragment key="9"><rect x="5" y="4" width="10" height="9" fill="#888" stroke="#fff" /><path d="M1 1 H5 V6 H3 V12 M7 15 H14" fill="none" stroke="#444" strokeWidth="1.500" /></Fragment>,
  <Fragment key="10"><path d="M6 2 H2 V14 H11 V11" fill="none" stroke="#444" strokeWidth="2" /><path d="M7 5 H14 V9 L11 11 H9 L7 9 Z M9 2 V5 M12 2 V5 M10 11 V14" fill="#fff" stroke="#444" /></Fragment>,
  <Fragment key="11"><path d="M1 6 H4 L8 2 V14 L4 10 H1 Z" fill="#fff" stroke="#666" /><path d="M10 5 Q12 8 10 11 M12 3 Q16 8 12 13" fill="none" stroke="#888" /></Fragment>,
];

const Task = ({ task, wide, active }) => (
  <TaskButton $wide={wide} $active={active} $latin={/^\w/.test(task[0])}>
    {task[1]}
    {task[0]}
  </TaskButton>
);

const Taskbar = () => (
  <Bar>
    <StartButton>
      <Glyph>
        <path d="M1 3 Q4 1 7 3 L6 8 Q3 6 0 8 Z" fill="#e8542c" />
        <path d="M8 3 Q11 5 15 3 L14 8 Q10 9 7 8 Z" fill="#7cb83c" />
        <path d="M0 9 Q3 7 6 9 L5 14 Q2 12 0 14 Z" fill="#3c7cd0" />
        <path d="M7 9 Q10 11 14 9 L12 14 Q9 16 6 14 Z" fill="#f4c430" />
      </Glyph>
      开始
    </StartButton>
    <QuickLaunch>
      <Glyph size={18}>
        <circle cx="4" cy="4" r="4" fill="#f0b428" /><circle cx="12" cy="4" r="4" fill="#5c94d8" />
        <circle cx="4" cy="12" r="4" fill="#64b83c" /><circle cx="12" cy="12" r="4" fill="#e04838" />
      </Glyph>
    </QuickLaunch>
    <BarGrip />
    <Tasks>
      <TaskRow $gap={2}>
        {rowOne.map((task, i) =>
          task ? (
            <Task key={i} task={task} />
          ) : (
            <LooseIcon key={i}>
              <Glyph size={17}>
                <rect width="16" height="16" rx="2" fill="#f6f2ec" />
                <path d="M8 2 L2 7 L7 14 Z" fill="#e02c1c" /><path d="M8 2 L14 12 L8 10 Z" fill="#2c9c3c" />
              </Glyph>
            </LooseIcon>
          )
        )}
      </TaskRow>
      <TaskRow $gap={3}>
        {rowTwo.map((task, i) => (
          <Task key={i} task={task} wide active={i === 4} />
        ))}
      </TaskRow>
    </Tasks>
    <BarGrip />
    <InputTools>
      <svg width="16" height="16" viewBox="0 0 16 16" fill="#eee" stroke="#777">
        <rect x="0.500" y="6.500" width="15" height="8" /><path d="M2 9 H14 M2 12 H14" strokeDasharray="1 1" /><path d="M4 5 Q8 0 14 3" fill="none" />
      </svg>
      <svg width="9" height="8" fill="none" stroke="#000"><path d="M2.500 2 V0.500 H8.500 V4.500 H7 M0.500 2.500 H6.500 V6.500 H0.500 Z" /></svg>
      <svg width="6" height="8"><path d="M0 2 H5 L2.500 5 Z" /></svg>
    </InputTools>
    <Tray>
      <svg width="8" height="14" fill="none" stroke="#000" strokeWidth="1.500"><path d="M1 7 L4 4 L7 7 M1 11 L4 8 L7 11" /></svg>
      <TrayIcons>
        {trayIcons.map((art, i) => (
          <Glyph key={i}>{art}</Glyph>
        ))}
      </TrayIcons>
      <Clock>
        <div>20:19</div>
        <div>星期三</div>
        <div>2016/8/31</div>
      </Clock>
      <svg width="16" height="62" viewBox="0 0 16 62">
        <rect x="1" y="26" width="14" height="10" fill="#2c6cc0" stroke="#223" /><path d="M2 32 L14 27 V35 H2 Z" fill="#5ca0e4" />
      </svg>
    </Tray>
  </Bar>
);

const App = () => (
  <Fragment>
    <GlobalStyle />
    <Desktop>
      <Editor />
      <Taskbar />
      <Popview />
      <StickyNote>工艺边应该倒斜角</StickyNote>
      <Reader />
      <ScoreBadge>75</ScoreBadge>
      <Annotations />
    </Desktop>
  </Fragment>
);

export default App;
